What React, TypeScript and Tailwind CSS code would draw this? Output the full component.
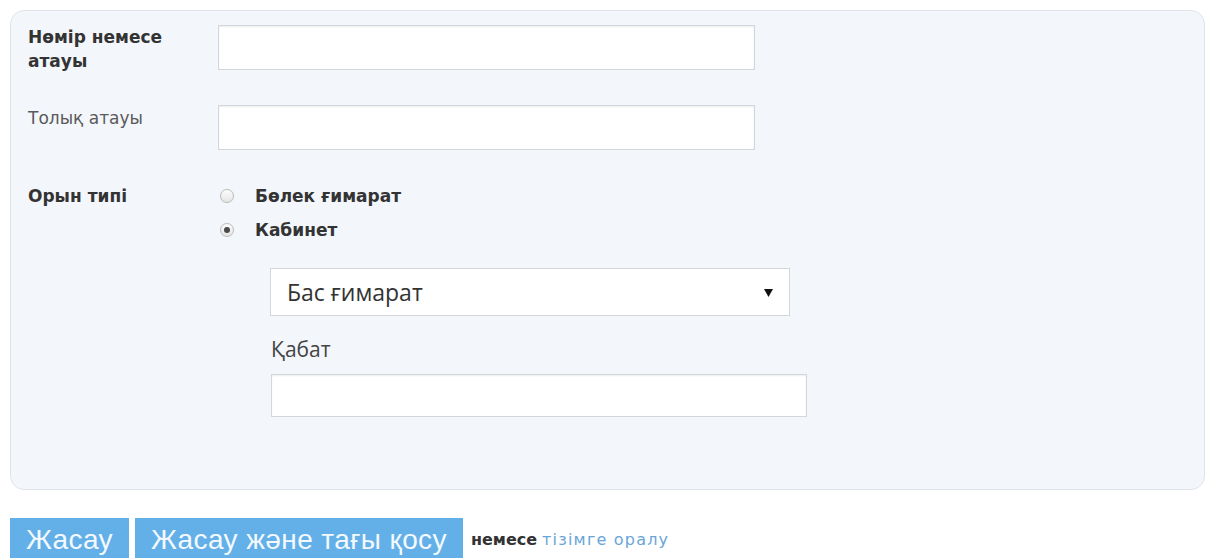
import { useState } from "react";

const labelFont = { fontFamily: '"DejaVu Sans", Verdana, sans-serif' };
const bodyFont = { fontFamily: '"Open Sans", "Noto Sans", sans-serif' };
const buttonFont = { fontFamily: '"Liberation Sans", Arial, sans-serif' };

const RadioOption = ({
  label,
  checked,
  onSelect,
}: {
  label: string;
  checked: boolean;
  onSelect: () => void;
}) => {
  return (
    <label
      className="flex h-[24px] cursor-pointer items-center"
      onClick={onSelect}
    >
      <span className="ml-[2px] flex h-[14px] w-[14px] items-center justify-center rounded-full border border-[#bdbdbd] bg-gradient-to-b from-[#fdfdfd] to-[#e4e4e4] shadow-[0_0_1px_rgba(0,0,0,0.1)]">
        {checked && (
          <span className="h-[6px] w-[6px] rounded-full bg-[#4a4a4a]" />
        )}
      </span>
      <span className="ml-[21px] text-[17px] font-bold leading-[24px] text-[#333]">
        {label}
      </span>
    </label>
  );
};

export default function App() {
  const [placeType, setPlaceType] = useState<"building" | "office">("office");

  return (
    <div className="min-h-screen bg-white pl-[10px] pr-[5px] pt-[10px]">
      <form
        className="h-[480px] rounded-[14px] border border-[#e1e5ea] bg-[#f3f6fb] pl-[17px] pt-[14px]"
        style={labelFont}
      >
        {/* number or name */}
        <div className="flex items-start">
          <div className="w-[190px] text-[17px] font-bold leading-[24px] text-[#333]">
            Нөмір немесе
            <br />
            атауы
          </div>
          <input
            type="text"
            className="h-[45px] w-[537px] border border-[#d3d6da] bg-white shadow-[inset_0_1px_2px_rgba(0,0,0,0.07)] outline-none"
          />
        </div>

        {/* full name */}
        <div className="mt-[32px] flex items-start">
          <div className="w-[190px] pt-[1px] text-[17px] leading-[24px] text-[#5a5a5a]">
            Толық атауы
          </div>
          <input
            type="text"
            className="h-[45px] w-[537px] border border-[#d3d6da] bg-white shadow-[inset_0_1px_2px_rgba(0,0,0,0.07)] outline-none"
          />
        </div>

        {/* place type */}
        <div className="mt-[34px] flex items-start">
          <div className="w-[190px] text-[17px] font-bold leading-[24px] text-[#333]">
            Орын типі
          </div>
          <div className="flex flex-col">
            <div className="flex flex-col gap-[10px]">
              <RadioOption
                label="Бөлек ғимарат"
                checked={placeType === "building"}
                onSelect={() => setPlaceType("building")}
              />
              <RadioOption
                label="Кабинет"
                checked={placeType === "office"}
                onSelect={() => setPlaceType("office")}
              />
            </div>

            <div className="ml-[52px] mt-[26px]" style={bodyFont}>
              <div className="relative h-[48px] w-[520px] border border-[#d3d6da] bg-white">
                <select className="h-full w-full appearance-none bg-transparent pl-[16px] text-[23px] text-[#333] outline-none">
                  <option>Бас ғимарат</option>
                </select>
                <svg
                  className="pointer-events-none absolute right-[16px] top-[19px]"
                  width="9"
                  height="9"
                  viewBox="0 0 9 9"
                >
                  <path d="M0 1h9L4.5 9z" fill="#111" />
                </svg>
              </div>
              <div className="ml-[1px] mt-[21px] text-[21px] leading-[24px] text-[#444]">
                Қабат
              </div>
              <input
                type="text"
                className="ml-[1px] mt-[13px] h-[43px] w-[536px] border border-[#d3d6da] bg-white shadow-[inset_0_1px_2px_rgba(0,0,0,0.07)] outline-none"
              />
            </div>
          </div>
        </div>
      </form>

      {/* actions */}
      <div className="mt-[28px] flex items-center">
        <button
          type="button"
          className="h-[44px] bg-[#63b0e9] px-[16px] text-[28px] tracking-[0.4px] text-[#f4f9fe]"
          style={buttonFont}
        >
          Жасау
        </button>
        <button
          type="button"
          className="ml-[6px] h-[44px] bg-[#63b0e9] px-[16px] text-[28px] tracking-[0.4px] text-[#f4f9fe]"
          style={buttonFont}
        >
          Жасау және тағы қосу
        </button>
        <span
          className="ml-[8px] text-[16px] font-bold text-[#333]"
          style={labelFont}
        >
          немесе
        </span>
        <a
          href="#"
          className="ml-[5px] text-[16px] tracking-[1.2px] text-[#6aa6d8]"
          style={labelFont}
        >
          тізімге оралу
        </a>
      </div>
    </div>
  );
}
